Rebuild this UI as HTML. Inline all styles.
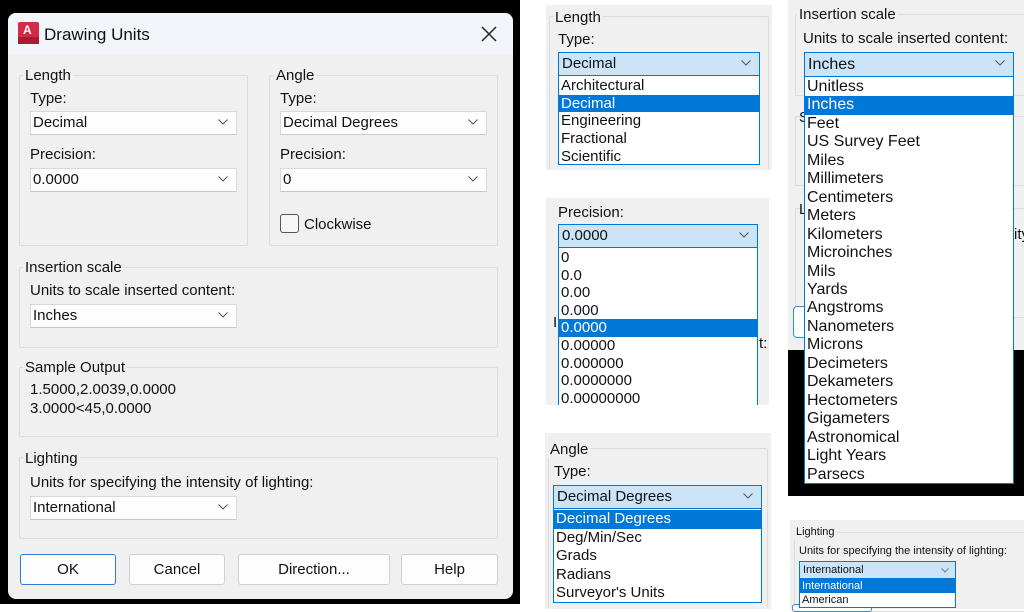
<!DOCTYPE html>
<html><head><meta charset="utf-8"><style>
*{margin:0;padding:0;box-sizing:border-box}
body{width:1024px;height:609px;background:#fff;position:relative;overflow:hidden;font-family:"Liberation Sans",Arial,sans-serif;color:#111}
.a{position:absolute}
.t{position:absolute;font-size:15px;line-height:17px;white-space:nowrap}
.g{position:absolute;border:1px solid #dcdcdc;border-radius:2px}
.lbl{position:absolute;background:#f0f0f0;padding:0 2px;font-size:15px;line-height:17px;white-space:nowrap}
.cb{position:absolute;background:#fdfdfd;border:1px solid #d9d9d9;border-bottom-color:#c8c8c8;font-size:15px;line-height:21px;padding-left:2px;white-space:nowrap}
.cb svg,.cs svg{position:absolute;right:8px;top:7px}
.cs{position:absolute;background:#cce4f7;border:1px solid #0078d7;font-size:15px;padding-left:3px;white-space:nowrap}
.list{position:absolute;background:#fff;border:1px solid #0078d7;overflow:hidden;font-size:15px;white-space:nowrap}
.list div{padding-left:2px}
.sel{background:#0078d7;color:#fff}
.btn{position:absolute;background:#fdfdfd;border:1px solid #d0d0d0;border-radius:3px;font-size:15px;text-align:center;line-height:29px}
.gp{position:absolute;background:#f0f0f0}
</style></head><body>
<!-- left dialog -->
<div class="a" style="left:0;top:0;width:520px;height:604px;background:#000"></div>
<div class="a" style="left:8px;top:13px;width:505px;height:586px;background:#f0f0f0;border-radius:8px;overflow:hidden">
<div class="a" style="left:0;top:0;width:505px;height:41px;background:#f2f5f9"></div>
</div>
<div class="a" style="left:18px;top:22px;width:21px;height:22px;background:#d42a45;border-radius:2px"></div>
<div class="a" style="left:18px;top:37px;width:21px;height:7px;background:#a81b33"></div>
<div class="t" style="left:23px;top:22px;color:#fff;font-size:12px;font-weight:bold">A</div>
<div class="t" style="left:44px;top:25px;font-size:17px;line-height:20px">Drawing Units</div>
<svg class="a" style="left:481px;top:26px" width="16" height="16"><path d="M1 1L15 15M15 1L1 15" stroke="#222" stroke-width="1.5"/></svg>

<div class="g" style="left:19px;top:75px;width:229px;height:171px"></div>
<div class="lbl" style="left:23px;top:67px">Length</div>
<div class="t" style="left:30px;top:90px">Type:</div>
<div class="cb" style="left:30px;top:111px;width:207px;height:24px">Decimal<svg width="10" height="6"><path d="M0.5 0.5L5 5L9.5 0.5" fill="none" stroke="#555"/></svg></div>
<div class="t" style="left:30px;top:146px">Precision:</div>
<div class="cb" style="left:30px;top:168px;width:207px;height:24px">0.0000<svg width="10" height="6"><path d="M0.5 0.5L5 5L9.5 0.5" fill="none" stroke="#555"/></svg></div>

<div class="g" style="left:269px;top:75px;width:229px;height:171px"></div>
<div class="lbl" style="left:274px;top:67px">Angle</div>
<div class="t" style="left:280px;top:90px">Type:</div>
<div class="cb" style="left:280px;top:111px;width:207px;height:24px">Decimal Degrees<svg width="10" height="6"><path d="M0.5 0.5L5 5L9.5 0.5" fill="none" stroke="#555"/></svg></div>
<div class="t" style="left:280px;top:146px">Precision:</div>
<div class="cb" style="left:280px;top:168px;width:207px;height:24px">0<svg width="10" height="6"><path d="M0.5 0.5L5 5L9.5 0.5" fill="none" stroke="#555"/></svg></div>
<div class="a" style="left:280px;top:214px;width:19px;height:19px;border:1px solid #555;border-radius:3px;background:#f6f6f6"></div>
<div class="t" style="left:304px;top:216px">Clockwise</div>

<div class="g" style="left:19px;top:267px;width:479px;height:81px"></div>
<div class="lbl" style="left:23px;top:259px">Insertion scale</div>
<div class="t" style="left:30px;top:282px">Units to scale inserted content:</div>
<div class="cb" style="left:30px;top:304px;width:207px;height:24px">Inches<svg width="10" height="6"><path d="M0.5 0.5L5 5L9.5 0.5" fill="none" stroke="#555"/></svg></div>

<div class="g" style="left:19px;top:367px;width:479px;height:70px"></div>
<div class="lbl" style="left:23px;top:359px">Sample Output</div>
<div class="t" style="left:30px;top:381px">1.5000,2.0039,0.0000</div>
<div class="t" style="left:30px;top:400px">3.0000&lt;45,0.0000</div>

<div class="g" style="left:19px;top:457px;width:479px;height:82px"></div>
<div class="lbl" style="left:23px;top:450px">Lighting</div>
<div class="t" style="left:30px;top:474px">Units for specifying the intensity of lighting:</div>
<div class="cb" style="left:30px;top:496px;width:207px;height:24px">International<svg width="10" height="6"><path d="M0.5 0.5L5 5L9.5 0.5" fill="none" stroke="#555"/></svg></div>

<div class="btn" style="left:20px;top:554px;width:96px;height:31px;border:1px solid #2f7bd6">OK</div>
<div class="btn" style="left:129px;top:554px;width:96px;height:31px">Cancel</div>
<div class="btn" style="left:238px;top:554px;width:152px;height:31px">Direction...</div>
<div class="btn" style="left:401px;top:554px;width:97px;height:31px">Help</div>

<!-- Panel A -->
<div class="gp" style="left:546px;top:5px;width:226px;height:165px"></div>
<div class="g" style="left:549px;top:16px;width:220px;height:154px;border-bottom:none"></div>
<div class="lbl" style="left:553px;top:9px">Length</div>
<div class="t" style="left:558px;top:31px">Type:</div>
<div class="cs" style="left:558px;top:52px;width:202px;height:24px;line-height:22px">Decimal<svg width="10" height="6"><path d="M0.5 0.5L5 5L9.5 0.5" fill="none" stroke="#555"/></svg></div>
<div class="list" style="left:558px;top:75px;width:202px;height:90px;line-height:17.7px;padding-top:1px">
<div>Architectural</div><div class="sel">Decimal</div><div>Engineering</div><div>Fractional</div><div>Scientific</div></div>

<!-- Panel B -->
<div class="gp" style="left:546px;top:198px;width:223px;height:207px"></div>
<div class="t" style="left:558px;top:204px">Precision:</div>
<div class="t" style="left:553px;top:314px">I</div>
<div class="t" style="left:759px;top:335px">t:</div>
<div class="cs" style="left:558px;top:224px;width:200px;height:24px;line-height:22px">0.0000<svg width="10" height="6"><path d="M0.5 0.5L5 5L9.5 0.5" fill="none" stroke="#555"/></svg></div>
<div class="list" style="left:558px;top:247px;width:200px;height:158px;line-height:17.6px;padding-top:1px;border-bottom:none">
<div>0</div><div>0.0</div><div>0.00</div><div>0.000</div><div class="sel">0.0000</div><div>0.00000</div><div>0.000000</div><div>0.0000000</div><div>0.00000000</div></div>

<!-- Panel C -->
<div class="gp" style="left:545px;top:433px;width:226px;height:176px"></div>
<div class="g" style="left:548px;top:448px;width:220px;height:160px;border-bottom:none"></div>
<div class="lbl" style="left:548px;top:441px">Angle</div>
<div class="t" style="left:554px;top:463px">Type:</div>
<div class="cs" style="left:553px;top:485px;width:209px;height:24px;line-height:22px">Decimal Degrees<svg width="10" height="6"><path d="M0.5 0.5L5 5L9.5 0.5" fill="none" stroke="#555"/></svg></div>
<div class="list" style="left:553px;top:508px;width:209px;height:95px;line-height:18.6px;padding-top:1px">
<div class="sel">Decimal Degrees</div><div>Deg/Min/Sec</div><div>Grads</div><div>Radians</div><div>Surveyor's Units</div></div>

<!-- Panel D -->
<div class="gp" style="left:788px;top:0;width:236px;height:350px"></div>
<div class="a" style="left:788px;top:350px;width:236px;height:146px;background:#000"></div>
<div class="g" style="left:795px;top:14px;width:240px;height:82px"></div>
<div class="g" style="left:795px;top:116px;width:240px;height:70px"></div>
<div class="g" style="left:795px;top:208px;width:240px;height:110px"></div>
<div class="a" style="left:793px;top:306px;width:20px;height:32px;border:1px solid #3b8ad9;border-radius:4px;background:#fdfdfd"></div>
<div class="lbl" style="left:797px;top:6px">Insertion scale</div>
<div class="t" style="left:803px;top:30px">Units to scale inserted content:</div>
<div class="t" style="left:799px;top:109px">S</div>
<div class="t" style="left:799px;top:201px">L</div>
<div class="t" style="left:1014px;top:226px">ity</div>
<div class="cs" style="left:804px;top:52px;width:210px;height:25px;line-height:23px;font-size:16px">Inches<svg width="10" height="6"><path d="M0.5 0.5L5 5L9.5 0.5" fill="none" stroke="#555"/></svg></div>
<div class="list" style="left:804px;top:76px;width:210px;height:408px;line-height:18.45px;font-size:16px;padding-top:1px">
<div>Unitless</div><div class="sel">Inches</div><div>Feet</div><div>US Survey Feet</div><div>Miles</div><div>Millimeters</div><div>Centimeters</div><div>Meters</div><div>Kilometers</div><div>Microinches</div><div>Mils</div><div>Yards</div><div>Angstroms</div><div>Nanometers</div><div>Microns</div><div>Decimeters</div><div>Dekameters</div><div>Hectometers</div><div>Gigameters</div><div>Astronomical</div><div>Light Years</div><div>Parsecs</div></div>

<!-- Panel E -->
<div class="gp" style="left:790px;top:520px;width:234px;height:89px"></div>
<div class="g" style="left:794px;top:532px;width:240px;height:80px"></div>
<div class="a" style="left:792px;top:604px;width:80px;height:8px;border:1px solid #3b8ad9;border-radius:3px;background:#fdfdfd"></div>
<div class="lbl" style="left:794px;top:526px;font-size:11px;line-height:13px">Lighting</div>
<div class="t" style="left:799px;top:545px;font-size:11px;line-height:13px">Units for specifying the intensity of lighting:</div>
<div class="cs" style="left:799px;top:561px;width:157px;height:18px;line-height:16px;font-size:11px">International<svg width="8" height="5" style="top:6px;right:6px"><path d="M0.5 0.5L4 4L7.5 0.5" fill="none" stroke="#777"/></svg></div>
<div class="list" style="left:799px;top:578px;width:157px;height:30px;line-height:14px;font-size:11px">
<div class="sel">International</div><div>American</div></div>
</body></html>
